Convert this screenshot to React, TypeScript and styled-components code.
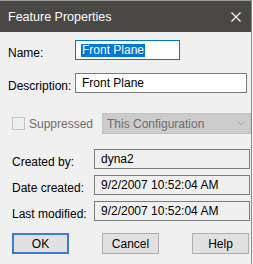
import React from "react";
import styled, { createGlobalStyle } from "styled-components";

const GlobalStyle = createGlobalStyle`
  html, body {
    margin: 0;
    padding: 0;
    background: #f7f7f7;
  }
  body {
    font-family: "Liberation Sans", Arial, sans-serif;
    font-size: 12px;
    color: #000;
  }
`;

const Window = styled.div`
  width: 251px;
  height: 264px;
  background: #f0f0f0;
  border-right: 1px solid #8a8a8a;
  display: flex;
  flex-direction: column;
  overflow: hidden;
`;

const TitleBar = styled.div`
  height: 31px;
  border-top: 1px solid #9a9a9a;
  background: #494844;
  color: #fff;
  display: flex;
  align-items: center;
  justify-content: space-between;
  padding: 0 10px 0 8px;
  font-size: 12.5px;
`;

const CloseIcon = () => (
  <svg width="10" height="10" viewBox="0 0 10 10">
    <path d="M0.5 0.5 L9.5 9.5 M9.5 0.5 L0.5 9.5" stroke="#fff" strokeWidth="1.2" />
  </svg>
);

const Body = styled.div`
  display: flex;
  flex-direction: column;
`;

const Row = styled.div<{ $top: number; $left?: number; $center?: boolean }>`
  display: flex;
  align-items: ${p => (p.$center ? "center" : "flex-start")};
  margin-top: ${p => p.$top}px;
  padding-left: ${p => p.$left ?? 8}px;
`;

const Label = styled.span<{ $width: number; $muted?: boolean; $drop?: number }>`
  width: ${p => p.$width}px;
  flex: none;
  line-height: 14px;
  color: ${p => (p.$muted ? "#6d6d6d" : "#000")};
  margin-top: ${p => p.$drop ?? 6}px;
`;

const TextBox = styled.div<{ $width: number; $focused?: boolean; $readOnly?: boolean }>`
  box-sizing: border-box;
  width: ${p => p.$width}px;
  height: 20px;
  border: 1px solid ${p => (p.$focused ? "#0078d7" : "#7a7a7a")};
  background: ${p => (p.$readOnly ? "#f0f0f0" : "#fff")};
  display: flex;
  align-items: center;
  padding-left: 6px;
  color: #000;
  white-space: nowrap;
`;

const Selected = styled.span`
  background: #0078d7;
  color: #fff;
  line-height: 13px;
  padding: 0 1px;
  margin-left: -1px;
`;

const CheckBox = styled.span`
  box-sizing: border-box;
  width: 13px;
  height: 13px;
  border: 1px solid #c4c4c4;
  background: #f0f0f0;
  margin-left: 4px;
  margin-right: 4px;
  flex: none;
`;

const Dropdown = styled.div`
  box-sizing: border-box;
  width: 149px;
  height: 21px;
  margin-left: auto;
  background: #cccccc;
  border: 1px solid #c2c2c2;
  color: #6d6d6d;
  display: flex;
  align-items: center;
  justify-content: space-between;
  padding: 0 5px 0 4px;
`;

const Chevron = () => (
  <svg width="8" height="5" viewBox="0 0 8 5">
    <path d="M0.5 0.5 L4 4 L7.5 0.5" stroke="#a8a8a8" fill="none" strokeWidth="1" />
  </svg>
);

const ButtonBar = styled.div`
  display: flex;
  justify-content: space-between;
  margin-top: 12px;
  padding: 0 2px 0 12px;
`;

const Button = styled.button<{ $default?: boolean }>`
  box-sizing: border-box;
  width: 57px;
  height: 21px;
  padding: 0;
  font: inherit;
  color: #000;
  background: #e1e1e1;
  border: ${p => (p.$default ? "2px solid #3d7bd6" : "1px solid #adadad")};
`;

export default function App() {
  return (
    <>
      <GlobalStyle />
      <Window>
        <TitleBar>
          <span>Feature Properties</span>
          <CloseIcon />
        </TitleBar>
        <Body>
          <Row $top={8}>
            <Label $width={67}>Name:</Label>
            <TextBox $width={105} $focused>
              <Selected>Front Plane</Selected>
            </TextBox>
          </Row>
          <Row $top={13}>
            <Label $width={67}>Description:</Label>
            <TextBox $width={172}>Front Plane</TextBox>
          </Row>
          <Row $top={20} $center>
            <CheckBox />
            <Label $width={60} $muted $drop={1}>Suppressed</Label>
            <Dropdown>
              <span>This Configuration</span>
              <Chevron />
            </Dropdown>
          </Row>
          <Row $top={15} $left={12}>
            <Label $width={82}>Created by:</Label>
            <TextBox $width={156} $readOnly>dyna2</TextBox>
          </Row>
          <Row $top={6} $left={12}>
            <Label $width={82}>Date created:</Label>
            <TextBox $width={156} $readOnly>9/2/2007 10:52:04 AM</TextBox>
          </Row>
          <Row $top={6} $left={12}>
            <Label $width={82}>Last modified:</Label>
            <TextBox $width={156} $readOnly>9/2/2007 10:52:04 AM</TextBox>
          </Row>
          <ButtonBar>
            <Button $default>OK</Button>
            <Button>Cancel</Button>
            <Button>Help</Button>
          </ButtonBar>
        </Body>
      </Window>
    </>
  );
}
